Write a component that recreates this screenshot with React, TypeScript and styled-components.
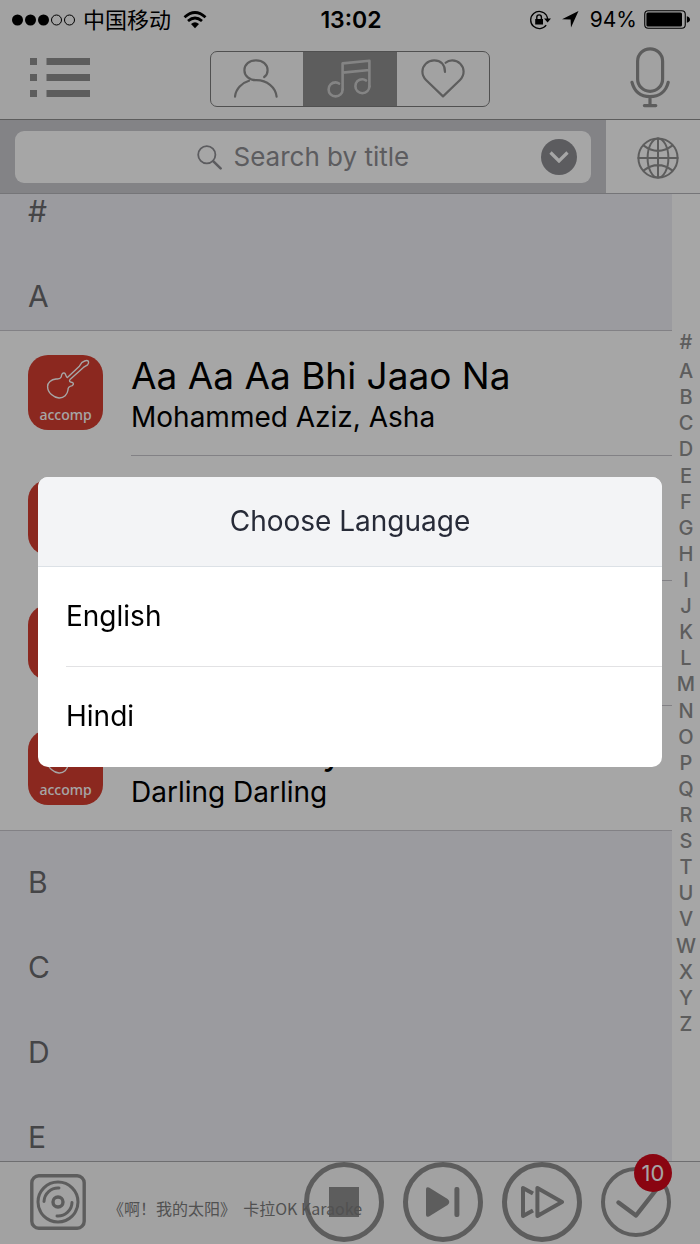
import React from "react";
import styled, { createGlobalStyle, css } from "styled-components";

const color = {
  ink: "#000",
  icon: "#8f8f8f",
  bar: "#f9f9f9",
  section: "#efeff4",
  line: "#c8c7cc",
  accomp: "#d63e30",
};

const sans = `Inter, "Noto Sans CJK SC", sans-serif`;

const GlobalStyle = createGlobalStyle`
  * { box-sizing: border-box; }
  body { margin: 0; font-family: ${sans}; color: ${color.ink}; }
  button { border: 0; padding: 0; background: none; font: inherit; color: inherit; cursor: pointer; }
  svg { display: block; flex: none; }
  h1, h2, p, ul, ol { margin: 0; padding: 0; font-weight: 400; }
  ul, ol { list-style: none; }
`;

const Screen = styled.div`
  display: flex;
  flex-direction: column;
  height: 100vh;
  overflow: hidden;
  background: #fff;
`;

const StatusBar = styled.div`
  display: grid;
  grid-template-columns: 1fr auto 1fr;
  align-items: center;
  height: 39px;
  padding: 0 10px 0 12px;
  font-size: 23px;
  line-height: 24px;
  background: ${color.bar};
`;

const StatusGroup = styled.div<{ $end?: boolean; $gap: number }>`
  display: flex;
  align-items: center;
  gap: ${(p) => p.$gap}px;
  justify-content: ${(p) => (p.$end ? "flex-end" : "flex-start")};
`;

const Level = styled.div`
  display: flex;
  align-items: center;
  gap: 7px;
`;

const Clock = styled.time`
  font-weight: 600;
`;

const Carrier = styled.span`
  font-size: 22px;
`;

const Percent = styled.span`
  font-size: 21px;
`;

const NavBar = styled.header`
  display: grid;
  grid-template-columns: 1fr auto 1fr;
  align-items: center;
  height: 81px;
  padding: 0 30px;
  background: ${color.bar};
  border-bottom: 1px solid ${color.icon};
`;

const IconButton = styled.button<{ $end?: boolean }>`
  justify-self: ${(p) => (p.$end ? "end" : "start")};
  padding-bottom: 3px;
  color: ${color.icon};
`;

const Segments = styled.div`
  display: flex;
  height: 56px;
  border: 1px solid #7c7c7c;
  border-radius: 7px;
  overflow: hidden;
`;

const Segment = styled.button<{ $active?: boolean }>`
  display: grid;
  place-items: center;
  width: ${(p) => (p.$active ? 94 : 92)}px;
  color: ${(p) => (p.$active ? "#cbcbcb" : color.icon)};
  background: ${(p) => (p.$active ? color.icon : "transparent")};
`;

const SearchRow = styled.div`
  display: flex;
  height: 74px;
  border-bottom: 1px solid #b4b4b8;
`;

const SearchArea = styled.div`
  flex: 1;
  display: flex;
  padding: 11px 15px 10px;
  background: #c9c9ce;
`;

const SearchField = styled.div`
  flex: 1;
  display: grid;
  grid-template-columns: 1fr auto 1fr;
  align-items: center;
  padding: 0 14px;
  background: #fff;
  border-radius: 9px;
`;

const SearchLabel = styled.label`
  grid-column: 2;
  display: flex;
  align-items: center;
  gap: 12px;
  color: #8e8e93;
`;

const SearchInput = styled.input`
  width: 176px;
  height: 32px;
  padding: 0;
  border: 0;
  outline: 0;
  background: transparent;
  font: 26px/32px ${sans};
  color: ${color.ink};
  &::placeholder { color: #8e8e93; opacity: 1; }
`;

const GlobeButton = styled.button`
  width: 94px;
  padding: 2px 0 0 10px;
  display: grid;
  place-items: center;
  color: ${color.icon};
  background: #fdfdfd;
`;

const Content = styled.main`
  flex: 1;
  min-height: 0;
  display: flex;
`;

const SongList = styled.div`
  flex: 1;
  min-width: 0;
  overflow-y: auto;
  scrollbar-width: none;
  background: ${color.section};
`;

const SectionTitle = styled.h2<{ $pinned?: boolean }>`
  padding: ${(p) => (p.$pinned ? 0 : 34)}px 28px 17px;
  font-size: 30px;
  line-height: 34px;
  color: #6a6a6e;
`;

const Songs = styled.ul`
  background: #fff;
  border-top: 1px solid ${color.line};
  border-bottom: 1px solid ${color.line};
`;

const SongRow = styled.li`
  display: flex;
  gap: 28px;
  padding-left: 28px;
`;

const SongBadge = styled.div`
  display: flex;
  flex-direction: column;
  align-items: center;
  flex: none;
  width: 75px;
  height: 75px;
  margin-top: 24px;
  border-radius: 20px;
  background: ${color.accomp};
  color: #fff;
  font: 500 14px/18px "Noto Sans", sans-serif;
`;

const SongText = styled.div`
  flex: 1;
  min-width: 0;
  height: 125px;
  padding-top: 23px;
  white-space: nowrap;
  border-bottom: 1px solid ${color.line};
  ${SongRow}:last-child & {
    height: 124px;
    border-bottom: 0;
  }
`;

const SongTitle = styled.p`
  font-size: 37px;
  line-height: 44px;
`;

const SongArtist = styled.p`
  font-size: 28px;
  line-height: 38px;
`;

const IndexBar = styled.ol`
  display: flex;
  flex-direction: column;
  justify-content: space-between;
  flex: none;
  width: 28px;
  padding: 135px 0 124px;
  font-size: 20px;
  font-weight: 500;
  line-height: 26px;
  text-align: center;
  background: #fff;
`;

const IndexItem = styled.li`
  &:first-child { margin-bottom: 3px; }
  a { color: ${color.icon}; text-decoration: none; }
`;

const Player = styled.footer`
  display: flex;
  align-items: center;
  flex: none;
  gap: 19px;
  height: 83px;
  padding: 0 29px 2px 30px;
  color: ${color.icon};
  background: ${color.bar};
  border-top: 1px solid #a9a9ac;
`;

const NowPlaying = styled.p`
  position: relative;
  z-index: 1;
  flex: 1;
  min-width: 0;
  padding: 11px 0 0 3px;
  font-size: 16px;
  line-height: 20px;
  font-family: "Noto Sans CJK SC", sans-serif;
  white-space: pre;
  color: #7d7d7d;
  pointer-events: none;
`;

const round = css`
  display: grid;
  place-items: center;
  border-radius: 50%;
`;

const PlayerButton = styled.button<{ $small?: boolean }>`
  ${round}
  position: relative;
  flex: none;
  width: ${(p) => (p.$small ? 70 : 80)}px;
  height: ${(p) => (p.$small ? 70 : 80)}px;
  border: ${(p) => (p.$small ? 4 : 5)}px solid ${color.icon};
`;

const Count = styled.span`
  ${round}
  position: absolute;
  top: -17px;
  right: -5px;
  width: 38px;
  height: 38px;
  font-size: 22px;
  line-height: 24px;
  color: #fff;
  background: #d4081b;
`;

const Backdrop = styled.div`
  position: fixed;
  inset: 0;
  z-index: 2;
  display: flex;
  align-items: center;
  justify-content: center;
  padding: 0 38px;
  background: rgba(0, 0, 0, 0.35);
`;

const Dialog = styled.section`
  flex: 1;
  overflow: hidden;
  border-radius: 10px;
  background: #fff;
`;

const DialogTitle = styled.h1`
  height: 90px;
  font-size: 28px;
  line-height: 89px;
  text-align: center;
  color: #272b38;
  background: #f3f4f6;
  border-bottom: 1px solid #dce1e6;
`;

const Choice = styled.li`
  margin-left: 28px;
  & + & { border-top: 1px solid #e2e2e4; }
  button {
    display: block;
    width: 100%;
    height: 99px;
    padding-bottom: 2px;
    text-align: left;
    font-size: 28px;
    line-height: 36px;
  }
  & + & button { height: 100px; }
`;

const stroke = (w: number) => ({
  fill: "none",
  stroke: "currentColor",
  strokeWidth: w,
  strokeLinecap: "round" as const,
  strokeLinejoin: "round" as const,
});

const SignalDots = () => (
  <svg width="64" height="12" viewBox="0 0 64 12" aria-hidden="true">
    {[5.5, 18.5, 31.5].map((x) => <circle key={x} cx={x} cy="6" r="5.5" />)}
    {[44.5, 57.5].map((x) => <circle key={x} cx={x} cy="6" r="5" fill="none" stroke="#000" />)}
  </svg>
);

const Wifi = () => (
  <svg width="24" height="18" viewBox="0 0 24 18" aria-hidden="true">
    <path d="M1.5 6.2Q12-3.2 22.5 6.2M5 10Q12 4 19 10" fill="none" stroke="#000" strokeWidth="2.8" />
    <path d="M8 13Q12 9.6 16 13L12 17.2Z" />
  </svg>
);

const RotationLock = () => (
  <svg width="22" height="20" viewBox="0 0 22 20" aria-hidden="true">
    <path d="M17.4 5.2A8.6 8.6 0 1 0 17.2 15.2M17.4 5.2Q18.4 7 18.6 9" fill="none" stroke="#000" strokeWidth="1.3" />
    <path d="M15 8.4H22L18.6 12.6ZM6.2 9H14V14.4H6.2Z" />
    <path d="M7.8 9V7.2A2.3 2.3 0 0 1 12.4 7.2V9" fill="none" stroke="#000" strokeWidth="1.4" />
  </svg>
);

const Location = () => (
  <svg width="17" height="17" viewBox="0 0 17 17" aria-hidden="true">
    <path d="M16.5 0L9 16.5L8.6 8.6L0 8.2Z" />
  </svg>
);

const Battery = () => (
  <svg width="46" height="19" viewBox="0 0 46 19" aria-hidden="true">
    <rect x=".75" y=".75" width="40.5" height="17.5" rx="3.5" fill="none" stroke="#000" strokeWidth="1.1" />
    <rect x="2.4" y="2.4" width="35.6" height="14.2" rx="1.5" />
    <path d="M42.8 6.2Q46 7 46 9.5T42.8 12.8Z" />
  </svg>
);

const MenuIcon = () => (
  <svg width="60" height="40" viewBox="0 0 60 40" fill="currentColor" aria-hidden="true">
    {[0, 16, 32].map((y) => (
      <path key={y} d={`M0 ${y}h7v7h-7zM16.5 ${y}H60v7H16.5z`} />
    ))}
  </svg>
);

const PersonIcon = () => (
  <svg width="46" height="40" viewBox="0 0 46 40" {...stroke(2.2)} aria-hidden="true">
    <path d="M30.2 18C32.4 16.4 33.6 13.8 33.6 11.2C33.6 5.4 28.8 1.4 22 1.4S10.4 5.4 10.4 11.2C10.4 16.8 15.4 21.4 22.5 21.2C33 21.4 41.4 28 42.6 37.6M15 21.8C8 23.8 1.8 30 1 37.6" />
  </svg>
);

const MusicIcon = () => (
  <svg width="46" height="40" viewBox="0 0 46 40" {...stroke(2.6)} aria-hidden="true">
    <path d="M15.6 30.4V4.4L42.4 1.8V27.4M15.6 13.6L42.4 11" />
    <path d="M12 24.6C10.8 23.6 9.8 23.4 8.6 23.4C4.6 23.4 1.6 26.4 1.6 30.4S4.6 37.4 8.6 37.4S15.6 34.4 15.6 30.4" />
    <path d="M39 21.4C37.8 20.4 36.6 20.2 35.4 20.2C31.4 20.2 28.4 23.2 28.4 27.2S31.4 34.2 35.4 34.2S42.4 31.2 42.4 27.2" />
  </svg>
);

const HeartIcon = () => (
  <svg width="44" height="40" viewBox="0 0 44 40" {...stroke(2.2)} aria-hidden="true">
    <path d="M24 13C24 5.5 19.5 1.4 13.2 1.4C6.5 1.4 1.4 6.4 1.4 12.6C1.4 16 2.6 18.6 5 21L22 37.4L39 21C41.4 18.6 42.6 16 42.6 12.6C42.6 6.4 37.6 1.4 31.2 1.4C28.2 1.4 26.4 2.2 24.6 3.8" />
  </svg>
);

const MicIcon = () => (
  <svg width="40" height="62" viewBox="0 0 40 62" {...stroke(3.2)} aria-hidden="true">
    <rect x="7.6" y="1.8" width="25" height="42.6" rx="12.5" />
    <path d="M2 35.4C4.4 44.6 11 49.6 20 49.6S36 44.6 38.2 35.4M20 49.6V57.6M14.4 58.6H25.8" />
  </svg>
);

const SearchIcon = () => (
  <svg width="25" height="25" viewBox="0 0 25 25" {...stroke(1.8)} aria-hidden="true">
    <circle cx="9.8" cy="9.8" r="8.6" />
    <path d="M16.4 16.4L23.6 23.4" strokeWidth="2.6" />
  </svg>
);

const DropButton = styled.button`
  ${round}
  justify-self: end;
  width: 36px;
  height: 36px;
  color: #fff;
  background: #8e8e93;
`;

const ChevronIcon = () => (
  <svg width="20" height="12" viewBox="0 0 20 12" aria-hidden="true">
    <path d="M1.5 1.5L10 10L18.5 1.5" fill="none" stroke="currentColor" strokeWidth="3.2" />
  </svg>
);

const GlobeIcon = () => (
  <svg width="42" height="42" viewBox="0 0 42 42" {...stroke(2)} aria-hidden="true">
    <circle cx="21" cy="21" r="19.6" />
    <ellipse cx="21" cy="21" rx="10.4" ry="19.6" />
    <path d="M21 1.4V40.6M1.4 21H40.6M6.4 8.4Q21 19.4 35.6 8.4M6.4 33.6Q21 22.6 35.6 33.6" />
  </svg>
);

const GuitarIcon = () => (
  <svg width="75" height="51" viewBox="0 0 75 51" {...stroke(1.4)} aria-hidden="true">
    <path d="M60.4 6.2C58.6 4.4 56.6 5.8 53.8 7.6L51.4 11.2L39.4 22.6C37.6 22 38.2 19.4 36.8 18.2C34.6 17.2 33.6 19 33.2 22C32 24.4 30 23.8 28 24C23 24.4 19.6 28 19.6 31.4C19.6 38 26 42.6 31 43C36 43.2 39.4 39.4 40 35C39.8 32.2 42 31 44.4 30.6C46.2 29 45.4 27.4 43.4 27.2C41.6 27 41 26 42 24.6L55.4 12.4L59.6 9.8Q61.2 8 60.4 6.2Z" />
  </svg>
);

const DiscIcon = () => (
  <svg width="56" height="56" viewBox="0 0 56 56" {...stroke(3)} aria-hidden="true">
    <rect x="1.8" y="1.8" width="52.4" height="52.4" rx="7" strokeWidth="3.4" />
    <circle cx="28" cy="28" r="20" />
    <circle cx="28" cy="28" r="5" strokeWidth="3.4" />
    <path d="M14 27.5A14 14 0 0 1 29 14M42 28.5A14 14 0 0 1 27 42" />
  </svg>
);

const StopIcon = () => (
  <svg width="30" height="30" viewBox="0 0 30 30" fill="currentColor" aria-hidden="true">
    <path d="M0 0H30V30H0Z" />
  </svg>
);

const NextIcon = () => (
  <svg width="34" height="30" viewBox="0 0 34 30" fill="currentColor" aria-hidden="true">
    <path d="M0 2.2Q0-.8 3 .6L21.6 12Q25 15 21.6 18L3 29.4Q0 30.8 0 27.8Z" />
    <rect x="28.4" width="5" height="30" rx="2" />
  </svg>
);

const ForwardIcon = () => (
  <svg width="46" height="34" viewBox="0 0 46 34" {...stroke(4)} aria-hidden="true">
    <path d="M18.4 3V31L43 17ZM14 8.6L4 3V31L14 25.4" strokeLinecap="butt" />
  </svg>
);

const CheckIcon = () => (
  <svg width="44" height="34" viewBox="0 0 44 34" {...stroke(4.4)} aria-hidden="true">
    <path d="M4.5 17.5L22 30.5L42 5" />
  </svg>
);

type Song = { id: number; title?: string; artist?: string };

const songs: Song[] = [
  { id: 1, title: "Aa Aa Aa Bhi Jaao Na", artist: "Mohammed Aziz, Asha" },
  { id: 2 },
  { id: 3 },
  { id: 4, title: "Aa Dil Se Pyar", artist: "Darling Darling" },
];

const letters = "#ABCDEFGHIJKLMNOPQRSTUVWXYZ".split("");

export default function App() {
  return (
    <>
      <GlobalStyle />
      <Screen>
        <StatusBar>
          <StatusGroup $gap={12}>
            <Level>
              <SignalDots />
              <Carrier>中国移动</Carrier>
            </Level>
            <Wifi />
          </StatusGroup>
          <Clock>13:02</Clock>
          <StatusGroup $end $gap={11}>
            <RotationLock />
            <Location />
            <Level>
              <Percent>94%</Percent>
              <Battery />
            </Level>
          </StatusGroup>
        </StatusBar>

        <NavBar>
          <IconButton aria-label="Menu"><MenuIcon /></IconButton>
          <Segments>
            <Segment aria-label="Singers"><PersonIcon /></Segment>
            <Segment aria-label="Songs" $active><MusicIcon /></Segment>
            <Segment aria-label="Favorites"><HeartIcon /></Segment>
          </Segments>
          <IconButton $end aria-label="Record"><MicIcon /></IconButton>
        </NavBar>

        <SearchRow>
          <SearchArea>
            <SearchField>
              <SearchLabel>
                <SearchIcon />
                <SearchInput type="text" placeholder="Search by title" aria-label="Search by title" />
              </SearchLabel>
              <DropButton aria-label="Search options"><ChevronIcon /></DropButton>
            </SearchField>
          </SearchArea>
          <GlobeButton aria-label="Language"><GlobeIcon /></GlobeButton>
        </SearchRow>

        <Content>
          <SongList>
            <SectionTitle $pinned>#</SectionTitle>
            <SectionTitle>A</SectionTitle>
            <Songs>
              {songs.map((song) => (
                <SongRow key={song.id}>
                  <SongBadge>
                    <GuitarIcon />
                    {song.title && "accomp"}
                  </SongBadge>
                  <SongText>
                    <SongTitle>{song.title}</SongTitle>
                    <SongArtist>{song.artist}</SongArtist>
                  </SongText>
                </SongRow>
              ))}
            </Songs>
            {["B", "C", "D", "E"].map((l) => <SectionTitle key={l}>{l}</SectionTitle>)}
          </SongList>
          <IndexBar>
            {letters.map((l) => (
              <IndexItem key={l}><a href={`#${l}`}>{l}</a></IndexItem>
            ))}
          </IndexBar>
        </Content>

        <Player>
          <DiscIcon />
          <NowPlaying>《啊！我的太阳》  卡拉OK Karaoke</NowPlaying>
          <PlayerButton aria-label="Stop"><StopIcon /></PlayerButton>
          <PlayerButton aria-label="Next"><NextIcon /></PlayerButton>
          <PlayerButton aria-label="Fast forward"><ForwardIcon /></PlayerButton>
          <PlayerButton $small aria-label="Selected songs">
            <CheckIcon />
            <Count>10</Count>
          </PlayerButton>
        </Player>
      </Screen>

      <Backdrop>
        <Dialog role="dialog" aria-modal="true" aria-labelledby="language-title">
          <DialogTitle id="language-title">Choose Language</DialogTitle>
          <ul>
            <Choice><button>English</button></Choice>
            <Choice><button>Hindi</button></Choice>
          </ul>
        </Dialog>
      </Backdrop>
    </>
  );
}
